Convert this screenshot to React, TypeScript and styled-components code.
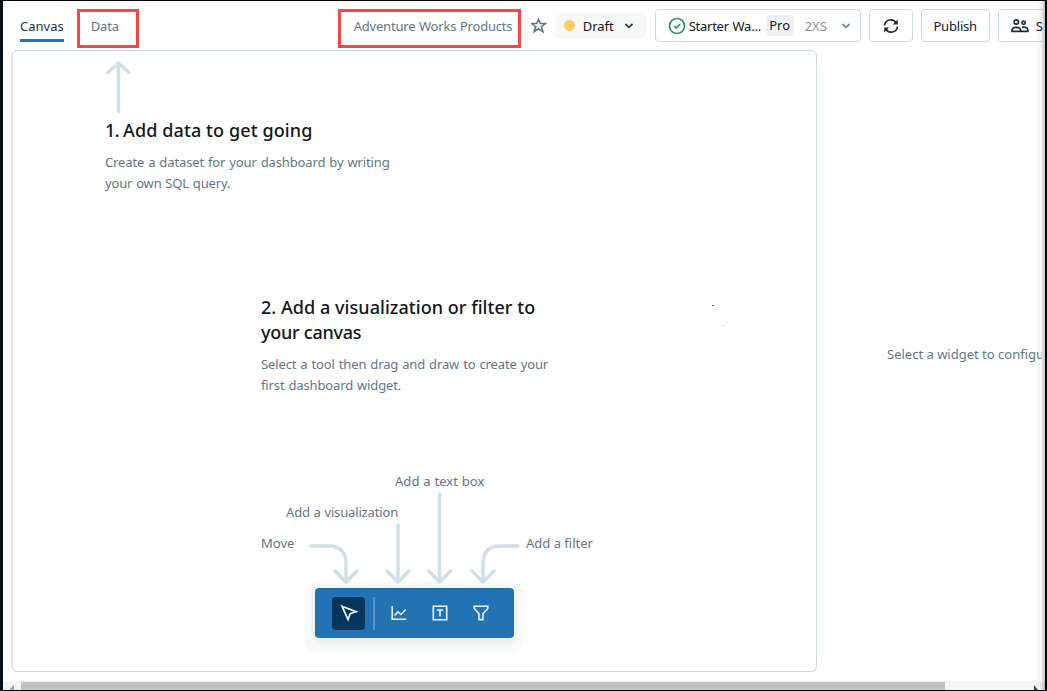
import React from 'react';
import styled, { createGlobalStyle } from 'styled-components';

const GlobalStyle = createGlobalStyle`
  * { box-sizing: border-box; }
  body { margin: 0; background: #fff; overflow: hidden; }
  h2, p { margin: 0; }
  button { font: inherit; color: inherit; padding: 0; margin: 0; }
`;

const Window = styled.div`
  position: relative;
  width: 1047px;
  height: 691px;
  display: flex;
  flex-direction: column;
  overflow: hidden;
  background: #fff;
  border: solid #000;
  border-width: 1px 2px 1px 3px;
  border-left-color: #020f18;
  font-family: 'Noto Sans', 'Open Sans', sans-serif;
  font-size: 13px;
  color: #5f7787;
`;

const EdgeShade = styled.div`
  position: absolute;
  top: 0;
  right: 0;
  bottom: 0;
  width: 9px;
  background: linear-gradient(to right, rgba(0, 0, 0, 0), rgba(0, 0, 0, 0.06) 60%, rgba(0, 0, 0, 0.25));
`;

const Header = styled.header`
  display: flex;
  align-items: flex-start;
  width: 1040px;
  height: 49px;
  flex: none;
  padding: 8px 0 0 17px;
  overflow: hidden;
`;

const Text = styled.span<{ $ls?: number; $ws?: number; $color?: string }>`
  white-space: nowrap;
  letter-spacing: ${(p) => p.$ls ?? 0}px;
  word-spacing: ${(p) => p.$ws ?? 0}px;
  color: ${(p) => p.$color ?? 'inherit'};
`;

const ActiveTab = styled.div`
  width: 44px;
  height: 33px;
  margin-right: 13px;
  line-height: 34px;
  border-bottom: 3px solid #2272b4;
`;

const Highlight = styled.div<{ $w: number; $pad: number; $gap?: number }>`
  width: ${(p) => p.$w}px;
  height: 39px;
  margin-left: ${(p) => p.$gap ?? 0}px;
  padding-left: ${(p) => p.$pad}px;
  border: 3px solid #fd4345;
  line-height: 28px;
  flex: none;
`;

const Actions = styled.div`
  display: flex;
  align-items: center;
  height: 33px;
  margin-left: 10px;
`;

const Status = styled.div`
  display: flex;
  align-items: center;
  width: 91px;
  height: 25px;
  flex: none;
  margin: 0 9px 0 8px;
  padding-left: 9px;
  border-radius: 4px;
  background: #f5faf8;
`;

const Dot = styled.i`
  width: 11px;
  height: 11px;
  margin-right: 8px;
  border-radius: 50%;
  background: #ffcb62;
`;

const Button = styled.button<{ $w: number; $gap?: number; $left?: boolean }>`
  display: flex;
  align-items: center;
  justify-content: ${(p) => (p.$left ? 'flex-start' : 'center')};
  width: ${(p) => p.$w}px;
  height: 33px;
  flex: none;
  margin-right: ${(p) => p.$gap ?? 8}px;
  padding-left: ${(p) => (p.$left ? 12 : 0)}px;
  background: #fff;
  border: 1px solid #cbd9e4;
  border-radius: 4px;
`;

const WarehouseName = styled.span`
  width: 74px;
  margin-left: 3px;
  text-align: left;
`;

const ShareLabel = styled.span`
  margin-left: 7px;
`;

const Badge = styled.span`
  width: 28px;
  height: 21px;
  margin: 0 11px 0 3px;
  line-height: 21px;
  text-align: center;
  background: #eef1f6;
  border-radius: 3px;
`;

const Main = styled.main`
  display: flex;
  flex: 1;
  padding-left: 8px;
`;

const Canvas = styled.section`
  width: 806px;
  height: 622px;
  padding: 10px 0 0 92px;
  border: 1px solid #c9d8e3;
  border-left: 2px solid #dfe8ee;
  border-radius: 6px;
`;

const DataArrow = styled.svg`
  display: block;
`;

const Step = styled.div<{ $indent: number; $top: number }>`
  margin: ${(p) => p.$top}px 0 0 ${(p) => p.$indent}px;
`;

const Title = styled.h2`
  font-size: 18px;
  font-weight: 500;
  line-height: 25px;
  color: #11171c;
  white-space: nowrap;
`;

const Copy = styled.p`
  margin-top: 9px;
  line-height: 20.5px;
  white-space: nowrap;
`;

const Guide = styled.div`
  position: relative;
  width: 340px;
  height: 117px;
  margin: 76px 0 0 156px;
`;

const GuideArrows = styled.svg`
  position: absolute;
  left: 0;
  top: 0;
`;

const GuideRow = styled.div<{ $indent?: number }>`
  display: flex;
  gap: 231px;
  height: 31px;
  line-height: 20px;
  padding-left: ${(p) => p.$indent ?? 0}px;
`;

const FilterLabel = styled.div`
  width: 0;
`;

const MoveLabel = styled.div`
  width: 34px;
`;

const Toolbar = styled.div`
  display: flex;
  align-items: center;
  width: 199px;
  height: 50px;
  margin-left: 210px;
  padding-left: 17px;
  background: #2272b4;
  border-radius: 4px;
  box-shadow: 0 2px 6px 1px #e6eaea, 0 4px 2px 10px #f7faf8;
`;

const Tool = styled.div<{ $active?: boolean }>`
  display: flex;
  align-items: center;
  justify-content: center;
  width: 33px;
  height: 33px;
  margin-right: 8px;
  border-radius: 4px;
  background: ${(p) => (p.$active ? '#04355d' : 'transparent')};
`;

const Divider = styled.div`
  width: 2px;
  height: 33px;
  margin-right: 7px;
  background: #5393c8;
`;

const SidePanel = styled.aside`
  width: 155px;
  margin: 294px 0 0 70px;
  overflow: hidden;
  height: 22px;
  line-height: 20px;
`;

const Speck = styled.i<{ $x: number; $y: number; $w: number; $c: string }>`
  position: absolute;
  left: ${(p) => p.$x}px;
  top: ${(p) => p.$y}px;
  width: ${(p) => p.$w}px;
  height: 1px;
  background: ${(p) => p.$c};
`;

const ScrollTrack = styled.div`
  display: flex;
  align-items: flex-end;
  height: 9px;
  flex: none;
  background: #f5f5f5;
`;

const Thumb = styled.div`
  width: 924px;
  height: 8px;
  margin: 0 87px 0 5px;
  background: #c2c2c2;
`;

const ChevronIcon = styled.svg<{ $left: number }>`
  margin-left: ${(p) => p.$left}px;
`;

const Chevron = ({ color, left }: { color: string; left: number }) => (
  <ChevronIcon $left={left} width="10" height="8" viewBox="0 0 10 8" fill="none" stroke={color} strokeWidth="1.8">
    <path d="M1.5 2 5 5.3 8.5 2" />
  </ChevronIcon>
);

export default function App() {
  return (
    <>
      <GlobalStyle />
      <Window>
        <Header>
          <ActiveTab><Text $color="#2b3339">Canvas</Text></ActiveTab>
          <Highlight $w={62} $pad={11}><Text $ls={-0.15}>Data</Text></Highlight>
          <Highlight $w={183} $pad={13} $gap={199}><Text $ls={-0.2} $ws={0.5}>Adventure Works Products</Text></Highlight>
          <Actions>
            <svg width="16" height="16" viewBox="0 0 16 16" fill="none" stroke="#5f7787" strokeWidth="1.6">
              <path d="M7.500 1.400 9.400 5.500h4.900l-3.900 3.200 1.500 5L7.500 10.800l-4.400 2.900L4.700 8.700.8 5.500h4.900z" />
            </svg>
            <Status>
              <Dot />
              <Text $color="#11171c">Draft</Text>
              <Chevron color="#33414a" left={10} />
            </Status>
            <Button $w={206} $left>
              <svg width="18" height="18" viewBox="0 0 18 18" fill="none" stroke="#34935a" strokeWidth="1.7">
                <circle cx="9" cy="9" r="7.5" />
                <path d="m6.2 9 2 2 3.9-3.9" />
              </svg>
              <WarehouseName><Text $color="#11171c" $ls={-0.25} $ws={0.6}>Starter Wa...</Text></WarehouseName>
              <Badge><Text $color="#11171c">Pro</Text></Badge>
              <Text $color="#8a9399">2XS</Text>
              <Chevron color="#6f8ba0" left={14} />
            </Button>
            <Button $w={44}>
              <svg width="16" height="16" viewBox="0 0 16 16" fill="none" stroke="#242b30" strokeWidth="1.7">
                <path d="M1.500 7.500A6.300 6.300 0 0 1 13.200 5M14.500 8.500A6.300 6.300 0 0 1 2.800 11" />
                <path d="M14.800 1.500v5h-5zM1.200 14.500v-5h5z" fill="#242b30" stroke="none" />
              </svg>
            </Button>
            <Button $w={69}><Text $color="#11171c" $ls={-0.2}>Publish</Text></Button>
            <Button $w={80} $left $gap={0}>
              <svg width="18" height="16" viewBox="0 0 18 16" fill="none" stroke="#242b30" strokeWidth="1.7">
                <circle cx="5.3" cy="4" r="2.2" />
                <circle cx="12.6" cy="4.8" r="1.6" />
                <path d="M1 13.400v-1c0-2 1.600-3 4.300-3s4.300 1 4.300 3v1zM11 9.300c3.800-.5 5.900.6 5.900 2.700v1.400H9.600" />
              </svg>
              <ShareLabel><Text $color="#11171c">Share</Text></ShareLabel>
            </Button>
          </Actions>
        </Header>
        <Main>
          <Canvas>
            <DataArrow width="26" height="54" viewBox="0 0 26 54" fill="none" stroke="#cfe0e8" strokeWidth="3.4" strokeLinecap="round" strokeLinejoin="round">
              <path d="M13.5 50.5V2M3 11.500 13.500 2 24 11.500" />
            </DataArrow>
            <Step $indent={0} $top={3}>
              <Title><Text $ls={-0.6}>1. </Text><Text $ls={0.1}>Add data to get going</Text></Title>
              <Copy>
                <Text $ls={-0.12} $ws={0.7}>Create a dataset for your dashboard by writing</Text><br />
                <Text $ls={-0.15} $ws={0.6}>your own SQL query.</Text>
              </Copy>
            </Step>
            <Step $indent={156} $top={102}>
              <Title><Text $ls={0.05}>2. Add a visualization or filter to</Text><br /><Text $ls={-0.25}>your canvas</Text></Title>
              <Copy>
                <Text $ls={-0.12} $ws={0.7}>Select a tool then drag and draw to create your</Text><br />
                <Text $ls={-0.12} $ws={0.6}>first dashboard widget.</Text>
              </Copy>
            </Step>
            <Guide>
              <GuideArrows width="340" height="117" viewBox="0 0 340 117" fill="none" stroke="#cfe0e8" strokeWidth="3.4" strokeLinecap="round" strokeLinejoin="round">
                <path d="M50 75h17q18 0 18 18v18M74 100l11 11 11-11" />
                <path d="M137 54v57M126 100l11 11 11-11" />
                <path d="M178.5 23v88M167.5 100l11 11 11-11" />
                <path d="M257 75h-18q-17 0-17 18v18M211 100l11 11 11-11" />
              </GuideArrows>
              <GuideRow $indent={134}><Text $ls={0.05} $ws={0.4}>Add a text box</Text></GuideRow>
              <GuideRow $indent={25}><Text $ls={-0.15} $ws={0.5}>Add a visualization</Text></GuideRow>
              <GuideRow>
                <MoveLabel><Text>Move</Text></MoveLabel>
                <FilterLabel><Text>Add a filter</Text></FilterLabel>
              </GuideRow>
            </Guide>
            <Toolbar>
              <Tool $active>
                <svg width="18" height="18" viewBox="0 0 18 18" fill="none" stroke="#f3fafc" strokeWidth="1.7">
                  <path d="M2 2.2 16 7.7 10.2 9.6 8 15.6z" />
                </svg>
              </Tool>
              <Divider />
              <Tool>
                <svg width="16" height="16" viewBox="0 0 16 16" fill="none" stroke="#eaf5fb" strokeWidth="1.6">
                  <path d="M1.2 1v13.3h14M3.5 10.5 7 6.8l3 2.7 4.8-5" />
                </svg>
              </Tool>
              <Tool>
                <svg width="16" height="16" viewBox="0 0 16 16" fill="none" stroke="#eaf5fb" strokeWidth="1.6">
                  <path d="M1.3 1.3h13.4v13.4H1.3zM4.8 5h6.4M8 5v6.5" />
                </svg>
              </Tool>
              <Tool>
                <svg width="16" height="16" viewBox="0 0 16 16" fill="none" stroke="#eaf5fb" strokeWidth="1.6">
                  <path d="M1.2 1.2h13.6v2.3L10 8.8v5.8H6V8.8L1.2 3.5z" />
                </svg>
              </Tool>
            </Toolbar>
          </Canvas>
          <SidePanel><Text>Select a widget to configure</Text></SidePanel>
        </Main>
        <ScrollTrack>
          <svg width="13" height="9" viewBox="0 0 13 9"><path d="M11 4v5H6z" fill="#999" /></svg>
          <Thumb />
          <svg width="10" height="9" viewBox="0 0 10 9"><path d="M2 4v5h4z" fill="#444" /></svg>
        </ScrollTrack>
        <Speck $x={709} $y={304} $w={2} $c="#666" />
        <Speck $x={718} $y={324} $w={4} $c="#ddd" />
        <EdgeShade />
      </Window>
    </>
  );
}
